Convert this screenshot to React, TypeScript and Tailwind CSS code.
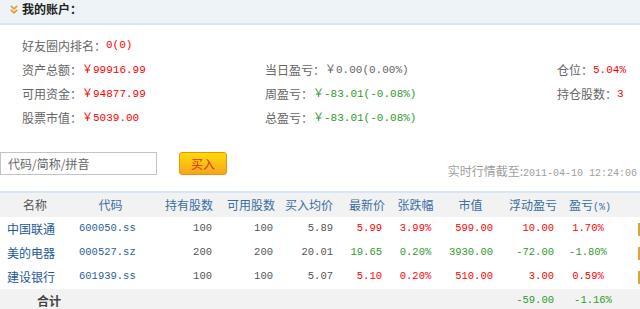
import React from 'react'

const mono = "font-['Liberation_Mono','Noto_Sans_CJK_SC',monospace]"
const cjk = "font-['Noto_Sans_CJK_SC','Liberation_Sans',sans-serif]"

const RED = 'text-[#ff0000]'
const GREEN = 'text-[#2f9a2f]'

interface Holding {
  name: string
  code: string
  held: string
  avail: string
  cost: string
  price: string
  change: string
  value: string
  profit: string
  pct: string
  up: boolean
}

const holdings: Holding[] = [
  { name: '中国联通', code: '600050.ss', held: '100', avail: '100', cost: '5.89', price: '5.99', change: '3.99%', value: '599.00', profit: '10.00', pct: '1.70%', up: true },
  { name: '美的电器', code: '000527.sz', held: '200', avail: '200', cost: '20.01', price: '19.65', change: '0.20%', value: '3930.00', profit: '-72.00', pct: '-1.80%', up: false },
  { name: '建设银行', code: '601939.ss', held: '100', avail: '100', cost: '5.07', price: '5.10', change: '0.20%', value: '510.00', profit: '3.00', pct: '0.59%', up: true }
]

const cols = 'grid grid-cols-[70px_81px_64px_61px_59px_51px_59px_51px_64px_60px_20px]'

function Stat({ label, value, tone }: { label: string; value: string; tone: string }) {
  return (
    <div className="flex items-center">
      <span className={`${cjk} text-[12px] text-[#666]`}>{label}</span>
      <span className={`${mono} text-[11px] ${tone}`}>{value}</span>
    </div>
  )
}

export default function App() {
  return (
    <div className={`w-[640px] h-[309px] overflow-hidden bg-white ${cjk}`}>
      {/* account header */}
      <div className="bg-[#eef3f7] border-b-2 border-[#d9e7f5] pb-[5px]">
        <div className="flex items-center h-[18px] pl-[10px]">
          <svg width="8" height="9" viewBox="0 0 8 9" className="mr-[4px]">
            <path d="M0.8 0.8 L4 3.8 L7.2 0.8" fill="none" stroke="#f0962a" strokeWidth="1.6" />
            <path d="M0.8 4.8 L4 7.8 L7.2 4.8" fill="none" stroke="#f0962a" strokeWidth="1.6" />
          </svg>
          <span className="text-[12px] font-bold text-[#222]">我的账户：</span>
        </div>
      </div>

      {/* summary */}
      <div className="pt-2 pl-[22px]">
        <div className="h-[25px] flex items-center">
          <Stat label="好友圈内排名：" value="0(0)" tone={RED} />
        </div>
        <div className="grid grid-cols-[243px_292px_1fr] auto-rows-[24px] items-center">
          <Stat label="资产总额：" value="￥99916.99" tone={RED} />
          <Stat label="当日盈亏：" value="￥0.00(0.00%)" tone="text-[#666]" />
          <Stat label="仓位：" value="5.04%" tone={RED} />
          <Stat label="可用资金：" value="￥94877.99" tone={RED} />
          <Stat label="周盈亏：" value="￥-83.01(-0.08%)" tone={GREEN} />
          <Stat label="持仓股数：" value="3" tone={RED} />
          <Stat label="股票市值：" value="￥5039.00" tone={RED} />
          <Stat label="总盈亏：" value="￥-83.01(-0.08%)" tone={GREEN} />
          <div />
        </div>
      </div>

      {/* search + buy */}
      <div className="mt-[22px] h-[30px] flex items-start">
        <input
          readOnly
          defaultValue="代码/简称/拼音"
          className={`w-[157px] h-[23px] border border-[#c4c4c4] pl-[7px] text-[12px] text-[#666] outline-none ${cjk}`}
        />
        <button
          type="button"
          className="ml-[22px] w-[48px] h-[23px] rounded-[3px] border border-[#e9920c] bg-gradient-to-b from-[#ffdb05] to-[#f6a51a] text-[12px] text-[#d8300a]"
        >
          买入
        </button>
        <div className="ml-auto self-end mb-[1px] mr-[3px] leading-[14px] text-[#a0a0a0] whitespace-nowrap">
          <span className="text-[12px]">实时行情截至:</span>
          <span className={`${mono} text-[10px]`}>2011-04-10 12:24:06</span>
        </div>
      </div>

      {/* holdings table */}
      <div className="mt-[9px] border-t-2 border-[#d6e6f5]">
        <div className={`${cols} h-[24px] items-center bg-[#f2f2f2] text-[12px] text-[#3a6ea5]`}>
          <div className="text-center text-[#555]">名称</div>
          <div className="text-center">代码</div>
          <div className="text-right pr-[2px]">持有股数</div>
          <div className="text-right pr-[1px]">可用股数</div>
          <div className="text-right pr-[2px]">买入均价</div>
          <div className="text-right pr-[1px]">最新价</div>
          <div className="text-center">张跌幅</div>
          <div className="text-center">市值</div>
          <div className="text-right pr-[3px]">浮动盈亏</div>
          <div className="text-center">盈亏<span className={`${mono} text-[10px]`}>(%)</span></div>
          <div />
        </div>

        {holdings.map((h) => {
          const tone = h.up ? RED : GREEN
          return (
            <div key={h.code} className={`${cols} h-[24px] items-center text-[10.5px] ${mono}`}>
              <div className={`${cjk} text-[12px] text-[#1d5a9b] pl-[7px]`}>{h.name}</div>
              <div className="text-[#2b5f97] pl-[9px]">{h.code}</div>
              <div className="text-right pr-[3px] text-[#555]">{h.held}</div>
              <div className="text-right pr-[3px] text-[#555]">{h.avail}</div>
              <div className="text-right pr-[2px] text-[#555]">{h.cost}</div>
              <div className={`text-right pr-[4px] ${tone}`}>{h.price}</div>
              <div className={`text-center ${tone}`}>{h.change}</div>
              <div className={`text-right pr-[3px] ${tone}`}>{h.value}</div>
              <div className={`text-right pr-[6px] ${tone}`}>{h.profit}</div>
              <div className={`text-center pr-[4px] ${tone}`}>{h.pct}</div>
              <div className="flex justify-end">
                <div className="w-[2px] h-[13px] bg-[#dca345]" />
              </div>
            </div>
          )
        })}

        <div className={`${cols} h-[24px] items-center bg-[#f2f2f2] text-[10.5px] ${mono}`}>
          <div className={`${cjk} col-span-2 pl-[37px] text-[12px] font-bold text-[#444]`}>合计</div>
          <div />
          <div />
          <div />
          <div />
          <div />
          <div />
          <div className={`text-right pr-[6px] ${GREEN}`}>-59.00</div>
          <div className={`text-center pl-[6px] ${GREEN}`}>-1.16%</div>
          <div />
        </div>
      </div>
    </div>
  )
}
